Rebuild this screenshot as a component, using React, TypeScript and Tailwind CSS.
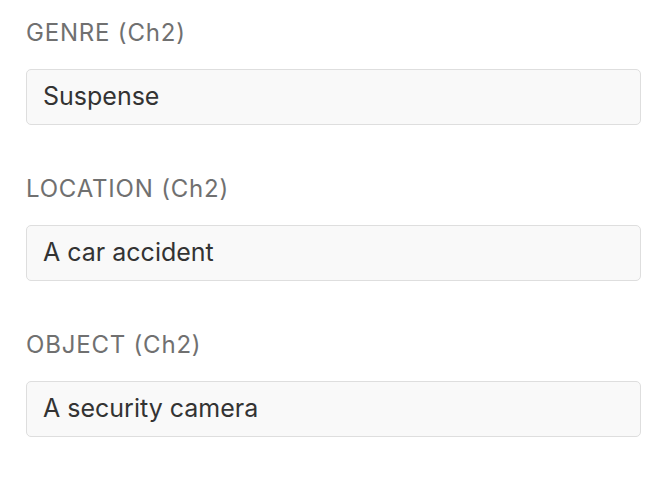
const fields = [
  { label: 'GENRE (Ch2)', value: 'Suspense' },
  { label: 'LOCATION (Ch2)', value: 'A car accident' },
  { label: 'OBJECT (Ch2)', value: 'A security camera' },
];

export default function App() {
  return (
    <div className="min-h-screen bg-white px-[26px] pt-[18px] font-['Inter',sans-serif]">
      <div className="flex flex-col gap-[49px]">
        {fields.map((f) => (
          <div key={f.label} className="flex flex-col">
            <label className="mb-[21px] text-[24px] leading-[30px] tracking-[0.8px] text-[#707070]">{f.label}</label>
            <div className="flex h-[56px] items-center rounded-[5px] border-[1.5px] border-[#dedede] bg-[#f9f9f9] px-[16px] text-[25px] text-[#333]">
              {f.value}
            </div>
          </div>
        ))}
      </div>
    </div>
  );
}
